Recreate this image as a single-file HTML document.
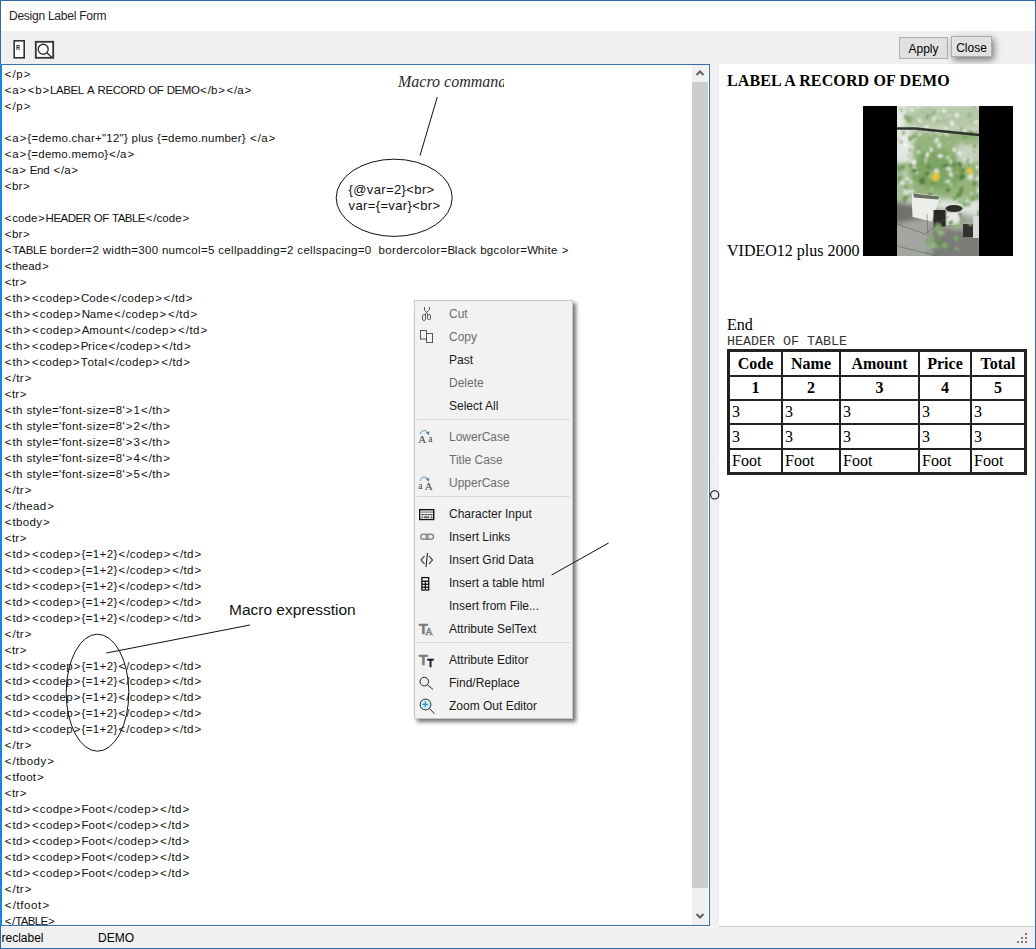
<!DOCTYPE html>
<html><head><meta charset="utf-8">
<style>
*{box-sizing:border-box}
html,body{margin:0;padding:0}
body{width:1036px;height:949px;overflow:hidden;position:relative;background:#fff;font-family:"Liberation Sans",sans-serif;color:#000}
.a{position:absolute}
#win{left:0;top:0;width:1036px;height:949px;border:1px solid #2f6aa6}
#title{left:9px;top:9px;font-size:12px;color:#1e1e1e;white-space:pre;letter-spacing:-0.25px}
#toolbar{left:1px;top:31px;width:1034px;height:33px;background:#f0f0f0}
.btn{position:absolute;background:#e1e1e1;border:1px solid #adadad;font-size:12px;color:#000;text-align:center;white-space:pre}
#editor{left:1px;top:64px;width:709px;height:862px;border-top:1px solid #3a6ea5;border-right:1px solid #3a6ea5;border-bottom:1px solid #3a6ea5;background:#fff}
#leftbar{left:0;top:64px;width:2px;height:862px;background:#1a84de}
#clip{left:2px;top:65px;width:690px;height:860px;overflow:hidden}
.ln{position:absolute;left:2px;font-size:11.5px;line-height:16px;height:16px;white-space:pre;color:#111;letter-spacing:var(--ls,0px)}
.ln i{font-style:normal;margin:0 0.68px}
.ln u{text-decoration:none;letter-spacing:calc(var(--ls,0px) - 0.6px)}
#sb{left:692px;top:65px;width:16px;height:860px;background:#f0f0f0}
#thumb{left:692px;top:82px;width:16px;height:806px;background:#cdcdcd}
#splitter{left:710px;top:64px;width:9px;height:862px;background:#f0f0f0}
#panel{left:719px;top:64px;width:315px;height:863px;background:#fff;border-bottom:1px solid #cfcfcf;overflow:hidden}
#status{left:1px;top:927px;width:1034px;height:21px;background:#f0f0f0;font-size:12px}
#bottom{left:0;top:948px;width:1036px;height:1px;background:#2f6aa6}
.menu{left:414px;top:300px;width:159px;height:419px;background:#f2f2f2;border:1px solid #c8c8c8;box-shadow:3px 3px 4px rgba(0,0,0,.55)}
.mi{position:absolute;left:34px;font-size:12px;line-height:16px;white-space:pre;color:#1a1a1a}
.dis{color:#6d6d6d}
.sep{position:absolute;left:2px;width:153px;height:1px;background:#d7d7d7}
.serif{font-family:"Liberation Serif",serif}
table.t{position:absolute;left:8px;top:285px;border-collapse:separate;border-spacing:0;border:2px solid #222;width:300px;font-family:"Liberation Serif",serif;font-size:16px}
table.t td,table.t th{border:1px solid #222;padding:2px;line-height:16px}
table.t th{font-weight:bold;text-align:center}
table.t td{text-align:left}

</style></head><body>
<div class="a" id="win"></div>
<div class="a" id="title">Design Label Form</div>
<div class="a" id="toolbar"></div>
<svg class="a" style="left:12px;top:39px" width="44" height="21" viewBox="0 0 44 21">
 <rect x="2.2" y="1.8" width="10" height="17" fill="#fff" stroke="#333" stroke-width="1.6"/>
 <text transform="translate(4.1 10.6) scale(0.75 1.05)" font-family="Liberation Sans" font-weight="bold" font-size="7.5" fill="#222">R</text>
 <rect x="23.8" y="2.8" width="17.4" height="16" fill="#fff" stroke="#333" stroke-width="1.8"/>
 <circle cx="31.2" cy="10.3" r="5" fill="none" stroke="#333" stroke-width="1.4"/>
 <line x1="34.8" y1="13.8" x2="40" y2="18.5" stroke="#333" stroke-width="1.4"/>
</svg>
<div class="btn" style="left:899px;top:37px;width:49px;height:22px;line-height:22.5px">Apply</div>
<div class="btn" style="left:951px;top:36px;width:41px;height:21px;line-height:22.5px;box-shadow:2px 3px 7px rgba(0,0,0,.5)">Close</div>
<div class="a" id="editor"></div>
<div class="a" id="leftbar"></div>
<div class="a" id="clip">
<div class="ln" style="top:0.90px;--ls:0.468px"><i>&lt;</i>/p<i>&gt;</i></div>
<div class="ln" style="top:16.90px;--ls:0.157px"><i>&lt;</i>a<i>&gt;</i><i>&lt;</i>b<i>&gt;</i><u>L</u><u>A</u><u>B</u><u>E</u><u>L</u> <u>A</u> <u>R</u><u>E</u><u>C</u><u>O</u><u>R</u><u>D</u> <u>O</u><u>F</u> <u>D</u><u>E</u><u>M</u><u>O</u><i>&lt;</i>/b<i>&gt;</i><i>&lt;</i>/a<i>&gt;</i></div>
<div class="ln" style="top:32.90px;--ls:0.468px"><i>&lt;</i>/p<i>&gt;</i></div>
<div class="ln" style="top:64.90px;--ls:0.254px"><i>&lt;</i>a<i>&gt;</i>{=demo.char+"12"} plus {=demo.number} <i>&lt;</i>/a<i>&gt;</i></div>
<div class="ln" style="top:80.90px;--ls:0.237px"><i>&lt;</i>a<i>&gt;</i>{=demo.memo}<i>&lt;</i>/a<i>&gt;</i></div>
<div class="ln" style="top:96.90px;--ls:0.013px"><i>&lt;</i>a<i>&gt;</i> <u>E</u>nd <i>&lt;</i>/a<i>&gt;</i></div>
<div class="ln" style="top:112.90px;--ls:0.047px"><i>&lt;</i>br<i>&gt;</i></div>
<div class="ln" style="top:144.90px;--ls:0.084px"><i>&lt;</i>code<i>&gt;</i><u>H</u><u>E</u><u>A</u><u>D</u><u>E</u><u>R</u> <u>O</u><u>F</u> <u>T</u><u>A</u><u>B</u><u>L</u><u>E</u><i>&lt;</i>/code<i>&gt;</i></div>
<div class="ln" style="top:160.90px;--ls:0.047px"><i>&lt;</i>br<i>&gt;</i></div>
<div class="ln" style="top:176.90px;--ls:0.328px"><i>&lt;</i><u>T</u><u>A</u><u>B</u><u>L</u><u>E</u> border=2 width=300 numcol=5 cellpadding=2 cellspacing=0  bordercolor=<u>B</u>lack bgcolor=<u>W</u>hite <i>&gt;</i></div>
<div class="ln" style="top:192.90px;--ls:0.060px"><i>&lt;</i>thead<i>&gt;</i></div>
<div class="ln" style="top:208.90px;--ls:-0.038px"><i>&lt;</i>tr<i>&gt;</i></div>
<div class="ln" style="top:224.90px;--ls:0.353px"><i>&lt;</i>th<i>&gt;</i><i>&lt;</i>codep<i>&gt;</i><u>C</u>ode<i>&lt;</i>/codep<i>&gt;</i><i>&lt;</i>/td<i>&gt;</i></div>
<div class="ln" style="top:240.90px;--ls:0.403px"><i>&lt;</i>th<i>&gt;</i><i>&lt;</i>codep<i>&gt;</i><u>N</u>ame<i>&lt;</i>/codep<i>&gt;</i><i>&lt;</i>/td<i>&gt;</i></div>
<div class="ln" style="top:256.90px;--ls:0.415px"><i>&lt;</i>th<i>&gt;</i><i>&lt;</i>codep<i>&gt;</i><u>A</u>mount<i>&lt;</i>/codep<i>&gt;</i><i>&lt;</i>/td<i>&gt;</i></div>
<div class="ln" style="top:272.90px;--ls:0.316px"><i>&lt;</i>th<i>&gt;</i><i>&lt;</i>codep<i>&gt;</i><u>P</u>rice<i>&lt;</i>/codep<i>&gt;</i><i>&lt;</i>/td<i>&gt;</i></div>
<div class="ln" style="top:288.90px;--ls:0.319px"><i>&lt;</i>th<i>&gt;</i><i>&lt;</i>codep<i>&gt;</i><u>T</u>otal<i>&lt;</i>/codep<i>&gt;</i><i>&lt;</i>/td<i>&gt;</i></div>
<div class="ln" style="top:304.90px;--ls:0.436px"><i>&lt;</i>/tr<i>&gt;</i></div>
<div class="ln" style="top:320.90px;--ls:-0.038px"><i>&lt;</i>tr<i>&gt;</i></div>
<div class="ln" style="top:336.90px;--ls:0.384px"><i>&lt;</i>th style='font-size=8'<i>&gt;</i>1<i>&lt;</i>/th<i>&gt;</i></div>
<div class="ln" style="top:352.90px;--ls:0.384px"><i>&lt;</i>th style='font-size=8'<i>&gt;</i>2<i>&lt;</i>/th<i>&gt;</i></div>
<div class="ln" style="top:368.90px;--ls:0.384px"><i>&lt;</i>th style='font-size=8'<i>&gt;</i>3<i>&lt;</i>/th<i>&gt;</i></div>
<div class="ln" style="top:384.90px;--ls:0.384px"><i>&lt;</i>th style='font-size=8'<i>&gt;</i>4<i>&lt;</i>/th<i>&gt;</i></div>
<div class="ln" style="top:400.90px;--ls:0.384px"><i>&lt;</i>th style='font-size=8'<i>&gt;</i>5<i>&lt;</i>/th<i>&gt;</i></div>
<div class="ln" style="top:416.90px;--ls:0.436px"><i>&lt;</i>/tr<i>&gt;</i></div>
<div class="ln" style="top:432.90px;--ls:0.363px"><i>&lt;</i>/thead<i>&gt;</i></div>
<div class="ln" style="top:448.90px;--ls:0.356px"><i>&lt;</i>tbody<i>&gt;</i></div>
<div class="ln" style="top:464.90px;--ls:-0.038px"><i>&lt;</i>tr<i>&gt;</i></div>
<div class="ln" style="top:480.90px;--ls:0.387px"><i>&lt;</i>td<i>&gt;</i><i>&lt;</i>codep<i>&gt;</i>{=1+2}<i>&lt;</i>/codep<i>&gt;</i><i>&lt;</i>/td<i>&gt;</i></div>
<div class="ln" style="top:496.90px;--ls:0.387px"><i>&lt;</i>td<i>&gt;</i><i>&lt;</i>codep<i>&gt;</i>{=1+2}<i>&lt;</i>/codep<i>&gt;</i><i>&lt;</i>/td<i>&gt;</i></div>
<div class="ln" style="top:512.90px;--ls:0.387px"><i>&lt;</i>td<i>&gt;</i><i>&lt;</i>codep<i>&gt;</i>{=1+2}<i>&lt;</i>/codep<i>&gt;</i><i>&lt;</i>/td<i>&gt;</i></div>
<div class="ln" style="top:528.90px;--ls:0.387px"><i>&lt;</i>td<i>&gt;</i><i>&lt;</i>codep<i>&gt;</i>{=1+2}<i>&lt;</i>/codep<i>&gt;</i><i>&lt;</i>/td<i>&gt;</i></div>
<div class="ln" style="top:544.90px;--ls:0.387px"><i>&lt;</i>td<i>&gt;</i><i>&lt;</i>codep<i>&gt;</i>{=1+2}<i>&lt;</i>/codep<i>&gt;</i><i>&lt;</i>/td<i>&gt;</i></div>
<div class="ln" style="top:560.90px;--ls:0.436px"><i>&lt;</i>/tr<i>&gt;</i></div>
<div class="ln" style="top:576.90px;--ls:-0.038px"><i>&lt;</i>tr<i>&gt;</i></div>
<div class="ln" style="top:592.90px;--ls:0.387px"><i>&lt;</i>td<i>&gt;</i><i>&lt;</i>codep<i>&gt;</i>{=1+2}<i>&lt;</i>/codep<i>&gt;</i><i>&lt;</i>/td<i>&gt;</i></div>
<div class="ln" style="top:607.90px;--ls:0.387px"><i>&lt;</i>td<i>&gt;</i><i>&lt;</i>codep<i>&gt;</i>{=1+2}<i>&lt;</i>/codep<i>&gt;</i><i>&lt;</i>/td<i>&gt;</i></div>
<div class="ln" style="top:623.90px;--ls:0.387px"><i>&lt;</i>td<i>&gt;</i><i>&lt;</i>codep<i>&gt;</i>{=1+2}<i>&lt;</i>/codep<i>&gt;</i><i>&lt;</i>/td<i>&gt;</i></div>
<div class="ln" style="top:639.90px;--ls:0.387px"><i>&lt;</i>td<i>&gt;</i><i>&lt;</i>codep<i>&gt;</i>{=1+2}<i>&lt;</i>/codep<i>&gt;</i><i>&lt;</i>/td<i>&gt;</i></div>
<div class="ln" style="top:655.90px;--ls:0.387px"><i>&lt;</i>td<i>&gt;</i><i>&lt;</i>codep<i>&gt;</i>{=1+2}<i>&lt;</i>/codep<i>&gt;</i><i>&lt;</i>/td<i>&gt;</i></div>
<div class="ln" style="top:671.90px;--ls:0.436px"><i>&lt;</i>/tr<i>&gt;</i></div>
<div class="ln" style="top:687.90px;--ls:0.459px"><i>&lt;</i>/tbody<i>&gt;</i></div>
<div class="ln" style="top:703.90px;--ls:0.325px"><i>&lt;</i>tfoot<i>&gt;</i></div>
<div class="ln" style="top:719.90px;--ls:-0.038px"><i>&lt;</i>tr<i>&gt;</i></div>
<div class="ln" style="top:735.90px;--ls:0.395px"><i>&lt;</i>td<i>&gt;</i><i>&lt;</i>codpe<i>&gt;</i><u>F</u>oot<i>&lt;</i>/codep<i>&gt;</i><i>&lt;</i>/td<i>&gt;</i></div>
<div class="ln" style="top:751.90px;--ls:0.395px"><i>&lt;</i>td<i>&gt;</i><i>&lt;</i>codep<i>&gt;</i><u>F</u>oot<i>&lt;</i>/codep<i>&gt;</i><i>&lt;</i>/td<i>&gt;</i></div>
<div class="ln" style="top:767.90px;--ls:0.395px"><i>&lt;</i>td<i>&gt;</i><i>&lt;</i>codep<i>&gt;</i><u>F</u>oot<i>&lt;</i>/codep<i>&gt;</i><i>&lt;</i>/td<i>&gt;</i></div>
<div class="ln" style="top:783.90px;--ls:0.395px"><i>&lt;</i>td<i>&gt;</i><i>&lt;</i>codep<i>&gt;</i><u>F</u>oot<i>&lt;</i>/codep<i>&gt;</i><i>&lt;</i>/td<i>&gt;</i></div>
<div class="ln" style="top:799.90px;--ls:0.395px"><i>&lt;</i>td<i>&gt;</i><i>&lt;</i>codep<i>&gt;</i><u>F</u>oot<i>&lt;</i>/codep<i>&gt;</i><i>&lt;</i>/td<i>&gt;</i></div>
<div class="ln" style="top:815.90px;--ls:0.436px"><i>&lt;</i>/tr<i>&gt;</i></div>
<div class="ln" style="top:831.90px;--ls:0.605px"><i>&lt;</i>/tfoot<i>&gt;</i></div>
<div class="ln" style="top:847.90px;--ls:-0.070px"><i>&lt;</i>/<u>T</u><u>A</u><u>B</u><u>L</u><u>E</u><i>&gt;</i></div>
</div>
<div class="a serif" style="left:398px;top:72.7px;width:106px;height:24px;overflow:hidden;font-size:16px;font-style:italic;white-space:pre;color:#2a2a2a">Macro command</div>
<div class="a" style="left:348.5px;top:182px;font-size:13px;line-height:15.7px;letter-spacing:0.38px;white-space:pre;color:#111">{@var=2}&lt;br&gt;
var={=var}&lt;br&gt;</div>
<div class="a" style="left:229px;top:601px;font-size:15.5px;white-space:pre;color:#111">Macro expresstion</div>
<svg class="a" style="left:0;top:0" width="710" height="925">
 <g stroke="#111" stroke-width="1" fill="none">
  <line x1="437.3" y1="97" x2="420" y2="155.6"/>
  <ellipse cx="394.2" cy="197.8" rx="58" ry="38.6"/>
  <line x1="106.4" y1="653" x2="250" y2="625"/>
  <ellipse cx="97.5" cy="692.7" rx="31.3" ry="58.5"/>
 </g>
</svg>

<div class="a" id="sb"></div>
<div class="a" id="thumb"></div>
<svg class="a" style="left:692px;top:65px" width="16" height="860">
 <polyline points="4.5,10 8,6.5 11.5,10" fill="none" stroke="#606060" stroke-width="2"/>
 <polyline points="4.5,849 8,852.5 11.5,849" fill="none" stroke="#606060" stroke-width="2"/>
</svg>
<div class="a" id="splitter"></div>
<div class="a" id="panel">
 <div class="a serif" style="left:8px;top:7.5px;font-size:16px;font-weight:bold;letter-spacing:0.13px;white-space:pre">LABEL A RECORD OF DEMO</div>
 <div class="a serif" style="left:8px;top:178px;font-size:16px;white-space:pre">VIDEO12 plus 2000</div>
 <svg class="a" style="left:144px;top:42px" width="150" height="150"><defs><filter id="bl" x="-30%" y="-30%" width="160%" height="160%"><feGaussianBlur stdDeviation="2.5"/></filter><filter id="bm" x="-30%" y="-30%" width="160%" height="160%"><feGaussianBlur stdDeviation="1.1"/></filter><filter id="bs" x="-30%" y="-30%" width="160%" height="160%"><feGaussianBlur stdDeviation="0.6"/></filter><clipPath id="pc"><rect x="34" y="0" width="82" height="150"/></clipPath></defs>
<rect x="0" y="0" width="150" height="150" fill="#000"/>
<g clip-path="url(#pc)"><g transform="translate(34 0)">
<rect x="0" y="0" width="82" height="150" fill="#dde3da"/>
<g filter="url(#bl)">
<rect x="5" y="0" width="80" height="22" fill="#b4c7a6"/>
<rect x="-5" y="0" width="14" height="20" fill="#e6ebe4"/>
<rect x="12" y="25" width="72" height="68" fill="#95b47d"/>
<ellipse cx="40" cy="64" rx="26" ry="20" fill="#7ea565"/>
<rect x="-5" y="26" width="20" height="30" fill="#e4e8e2"/>
<rect x="-5" y="56" width="18" height="40" fill="#a9bf9a"/>
<rect x="60" y="38" width="22" height="18" fill="#c9d4c2"/>
<path d="M-5 94 L40 102 L85 112 L85 155 L-5 155 Z" fill="#a3a5a1"/>
<path d="M-5 96 L20 100 L30 112 L-5 118 Z" fill="#6f716d"/>
<path d="M35 120 L85 128 L85 155 L35 155 Z" fill="#7a7c78"/>
</g>
<g filter="url(#bm)">
<ellipse cx="37.1" cy="13.4" rx="2.8" ry="2.0" fill="#dfe7da" opacity="0.95" transform="rotate(91 37.1 13.4)"/>
<ellipse cx="15.1" cy="12.3" rx="2.3" ry="1.8" fill="#9ab585" opacity="0.95" transform="rotate(17 15.1 12.3)"/>
<ellipse cx="11.6" cy="12.9" rx="2.8" ry="2.1" fill="#88a874" opacity="0.95" transform="rotate(107 11.6 12.9)"/>
<ellipse cx="79.1" cy="15.7" rx="2.2" ry="1.3" fill="#eef2ec" opacity="0.95" transform="rotate(3 79.1 15.7)"/>
<ellipse cx="4.9" cy="4.6" rx="1.5" ry="0.8" fill="#88a874" opacity="0.95" transform="rotate(84 4.9 4.6)"/>
<ellipse cx="48.5" cy="4.7" rx="1.5" ry="0.9" fill="#eef2ec" opacity="0.95" transform="rotate(1 48.5 4.7)"/>
<ellipse cx="37.5" cy="6.7" rx="3.0" ry="2.7" fill="#9ab585" opacity="0.95" transform="rotate(151 37.5 6.7)"/>
<ellipse cx="25.9" cy="5.5" rx="1.6" ry="0.8" fill="#88a874" opacity="0.95" transform="rotate(138 25.9 5.5)"/>
<ellipse cx="8.8" cy="7.0" rx="1.1" ry="0.6" fill="#dfe7da" opacity="0.95" transform="rotate(123 8.8 7.0)"/>
<ellipse cx="17.2" cy="21.8" rx="1.9" ry="1.7" fill="#eef2ec" opacity="0.95" transform="rotate(72 17.2 21.8)"/>
<ellipse cx="46.4" cy="4.8" rx="2.3" ry="1.5" fill="#eef2ec" opacity="0.95" transform="rotate(56 46.4 4.8)"/>
<ellipse cx="79.1" cy="18.2" rx="1.2" ry="0.7" fill="#eef2ec" opacity="0.95" transform="rotate(18 79.1 18.2)"/>
<ellipse cx="38.1" cy="11.7" rx="2.4" ry="1.4" fill="#dfe7da" opacity="0.95" transform="rotate(92 38.1 11.7)"/>
<ellipse cx="34.4" cy="9.2" rx="1.8" ry="1.6" fill="#9ab585" opacity="0.95" transform="rotate(0 34.4 9.2)"/>
<ellipse cx="81.8" cy="0.5" rx="1.4" ry="1.2" fill="#eef2ec" opacity="0.95" transform="rotate(108 81.8 0.5)"/>
<ellipse cx="3.5" cy="3.5" rx="1.9" ry="0.9" fill="#9ab585" opacity="0.95" transform="rotate(110 3.5 3.5)"/>
<ellipse cx="31.7" cy="1.8" rx="1.4" ry="1.1" fill="#9ab585" opacity="0.95" transform="rotate(3 31.7 1.8)"/>
<ellipse cx="30.5" cy="10.9" rx="2.9" ry="2.0" fill="#88a874" opacity="0.95" transform="rotate(103 30.5 10.9)"/>
<ellipse cx="15.0" cy="3.7" rx="2.8" ry="2.3" fill="#dfe7da" opacity="0.95" transform="rotate(45 15.0 3.7)"/>
<ellipse cx="13.0" cy="15.1" rx="2.1" ry="1.6" fill="#88a874" opacity="0.95" transform="rotate(70 13.0 15.1)"/>
<ellipse cx="49.5" cy="10.1" rx="1.2" ry="0.6" fill="#dfe7da" opacity="0.95" transform="rotate(173 49.5 10.1)"/>
<ellipse cx="60.7" cy="9.4" rx="1.8" ry="1.6" fill="#dfe7da" opacity="0.95" transform="rotate(88 60.7 9.4)"/>
<ellipse cx="76.2" cy="23.5" rx="1.3" ry="0.9" fill="#eef2ec" opacity="0.95" transform="rotate(118 76.2 23.5)"/>
<ellipse cx="23.0" cy="22.0" rx="1.4" ry="0.7" fill="#88a874" opacity="0.95" transform="rotate(48 23.0 22.0)"/>
<ellipse cx="20.4" cy="1.1" rx="1.6" ry="1.1" fill="#eef2ec" opacity="0.95" transform="rotate(175 20.4 1.1)"/>
<ellipse cx="29.7" cy="21.4" rx="3.0" ry="2.3" fill="#dfe7da" opacity="0.95" transform="rotate(124 29.7 21.4)"/>
<ellipse cx="48.4" cy="22.2" rx="1.9" ry="1.3" fill="#eef2ec" opacity="0.95" transform="rotate(56 48.4 22.2)"/>
<ellipse cx="1.7" cy="15.3" rx="2.0" ry="1.6" fill="#eef2ec" opacity="0.95" transform="rotate(57 1.7 15.3)"/>
<ellipse cx="6.2" cy="13.1" rx="2.5" ry="2.1" fill="#dfe7da" opacity="0.95" transform="rotate(133 6.2 13.1)"/>
<ellipse cx="65.0" cy="22.0" rx="1.7" ry="1.3" fill="#88a874" opacity="0.95" transform="rotate(162 65.0 22.0)"/>
<ellipse cx="77.4" cy="0.7" rx="2.0" ry="1.0" fill="#88a874" opacity="0.95" transform="rotate(119 77.4 0.7)"/>
<ellipse cx="47.8" cy="14.6" rx="1.2" ry="0.9" fill="#88a874" opacity="0.95" transform="rotate(179 47.8 14.6)"/>
<ellipse cx="59.7" cy="9.3" rx="2.5" ry="1.8" fill="#eef2ec" opacity="0.95" transform="rotate(79 59.7 9.3)"/>
<ellipse cx="42.5" cy="12.3" rx="1.6" ry="0.9" fill="#eef2ec" opacity="0.95" transform="rotate(4 42.5 12.3)"/>
<ellipse cx="40.8" cy="14.7" rx="2.8" ry="1.7" fill="#9ab585" opacity="0.95" transform="rotate(2 40.8 14.7)"/>
<ellipse cx="11.7" cy="14.7" rx="2.0" ry="1.6" fill="#88a874" opacity="0.95" transform="rotate(62 11.7 14.7)"/>
<ellipse cx="40.9" cy="5.8" rx="1.8" ry="1.1" fill="#dfe7da" opacity="0.95" transform="rotate(114 40.9 5.8)"/>
<ellipse cx="72.2" cy="9.2" rx="2.2" ry="1.4" fill="#88a874" opacity="0.95" transform="rotate(25 72.2 9.2)"/>
<ellipse cx="28.8" cy="21.5" rx="1.1" ry="0.6" fill="#dfe7da" opacity="0.95" transform="rotate(176 28.8 21.5)"/>
<ellipse cx="9.3" cy="11.3" rx="2.9" ry="2.4" fill="#88a874" opacity="0.95" transform="rotate(69 9.3 11.3)"/>
<ellipse cx="55.1" cy="17.2" rx="2.7" ry="2.0" fill="#eef2ec" opacity="0.95" transform="rotate(58 55.1 17.2)"/>
<ellipse cx="22.8" cy="14.6" rx="2.4" ry="1.4" fill="#eef2ec" opacity="0.95" transform="rotate(64 22.8 14.6)"/>
<ellipse cx="52.6" cy="9.7" rx="1.4" ry="1.1" fill="#dfe7da" opacity="0.95" transform="rotate(48 52.6 9.7)"/>
<ellipse cx="65.3" cy="23.6" rx="1.2" ry="0.7" fill="#9ab585" opacity="0.95" transform="rotate(96 65.3 23.6)"/>
<ellipse cx="78.6" cy="16.4" rx="1.4" ry="1.0" fill="#eef2ec" opacity="0.95" transform="rotate(32 78.6 16.4)"/>
<ellipse cx="61.9" cy="44.3" rx="1.1" ry="0.6" fill="#9cbc86" opacity="0.95" transform="rotate(140 61.9 44.3)"/>
<ellipse cx="57.2" cy="43.8" rx="2.1" ry="1.7" fill="#f4f6f2" opacity="0.95" transform="rotate(71 57.2 43.8)"/>
<ellipse cx="74.3" cy="27.3" rx="2.7" ry="2.1" fill="#5a8544" opacity="0.95" transform="rotate(23 74.3 27.3)"/>
<ellipse cx="16.1" cy="57.7" rx="1.0" ry="0.7" fill="#9cbc86" opacity="0.95" transform="rotate(117 16.1 57.7)"/>
<ellipse cx="65.3" cy="59.9" rx="1.8" ry="1.4" fill="#f4f6f2" opacity="0.95" transform="rotate(37 65.3 59.9)"/>
<ellipse cx="71.0" cy="54.3" rx="2.7" ry="1.5" fill="#5a8544" opacity="0.95" transform="rotate(44 71.0 54.3)"/>
<ellipse cx="80.4" cy="61.1" rx="2.0" ry="1.6" fill="#f4f6f2" opacity="0.95" transform="rotate(58 80.4 61.1)"/>
<ellipse cx="70.2" cy="37.2" rx="1.1" ry="0.8" fill="#6e9a54" opacity="0.95" transform="rotate(99 70.2 37.2)"/>
<ellipse cx="40.0" cy="25.1" rx="2.5" ry="1.3" fill="#e2e9de" opacity="0.95" transform="rotate(144 40.0 25.1)"/>
<ellipse cx="43.7" cy="50.1" rx="2.6" ry="1.8" fill="#f4f6f2" opacity="0.95" transform="rotate(180 43.7 50.1)"/>
<ellipse cx="42.5" cy="49.8" rx="1.8" ry="1.5" fill="#f4f6f2" opacity="0.95" transform="rotate(104 42.5 49.8)"/>
<ellipse cx="7.1" cy="32.4" rx="1.9" ry="1.2" fill="#f4f6f2" opacity="0.95" transform="rotate(131 7.1 32.4)"/>
<ellipse cx="13.5" cy="43.5" rx="2.6" ry="1.6" fill="#9cbc86" opacity="0.95" transform="rotate(121 13.5 43.5)"/>
<ellipse cx="17.1" cy="56.3" rx="2.7" ry="1.9" fill="#e2e9de" opacity="0.95" transform="rotate(103 17.1 56.3)"/>
<ellipse cx="33.7" cy="28.3" rx="1.0" ry="0.7" fill="#eef2ec" opacity="0.95" transform="rotate(97 33.7 28.3)"/>
<ellipse cx="42.3" cy="39.2" rx="2.4" ry="1.8" fill="#f4f6f2" opacity="0.95" transform="rotate(88 42.3 39.2)"/>
<ellipse cx="13.7" cy="59.4" rx="1.8" ry="1.6" fill="#5a8544" opacity="0.95" transform="rotate(144 13.7 59.4)"/>
<ellipse cx="22.1" cy="42.0" rx="1.2" ry="0.8" fill="#5a8544" opacity="0.95" transform="rotate(147 22.1 42.0)"/>
<ellipse cx="43.0" cy="28.1" rx="1.8" ry="0.9" fill="#f4f6f2" opacity="0.95" transform="rotate(47 43.0 28.1)"/>
<ellipse cx="63.9" cy="24.9" rx="1.3" ry="0.8" fill="#6e9a54" opacity="0.95" transform="rotate(124 63.9 24.9)"/>
<ellipse cx="59.3" cy="33.3" rx="1.9" ry="1.3" fill="#9cbc86" opacity="0.95" transform="rotate(105 59.3 33.3)"/>
<ellipse cx="51.1" cy="51.3" rx="2.3" ry="1.9" fill="#f4f6f2" opacity="0.95" transform="rotate(4 51.1 51.3)"/>
<ellipse cx="33.9" cy="44.1" rx="1.3" ry="0.7" fill="#f4f6f2" opacity="0.95" transform="rotate(114 33.9 44.1)"/>
<ellipse cx="17.9" cy="32.2" rx="2.0" ry="1.5" fill="#f4f6f2" opacity="0.95" transform="rotate(25 17.9 32.2)"/>
<ellipse cx="51.5" cy="37.2" rx="1.3" ry="1.0" fill="#e2e9de" opacity="0.95" transform="rotate(160 51.5 37.2)"/>
<ellipse cx="17.9" cy="61.9" rx="2.6" ry="1.4" fill="#f4f6f2" opacity="0.95" transform="rotate(43 17.9 61.9)"/>
<ellipse cx="7.2" cy="38.7" rx="1.8" ry="1.6" fill="#f4f6f2" opacity="0.95" transform="rotate(98 7.2 38.7)"/>
<ellipse cx="10.3" cy="39.3" rx="2.2" ry="1.1" fill="#f4f6f2" opacity="0.95" transform="rotate(36 10.3 39.3)"/>
<ellipse cx="29.3" cy="55.2" rx="1.7" ry="1.3" fill="#6e9a54" opacity="0.95" transform="rotate(114 29.3 55.2)"/>
<ellipse cx="41.2" cy="50.1" rx="1.3" ry="0.7" fill="#eef2ec" opacity="0.95" transform="rotate(19 41.2 50.1)"/>
<ellipse cx="62.5" cy="47.3" rx="2.6" ry="1.8" fill="#eef2ec" opacity="0.95" transform="rotate(34 62.5 47.3)"/>
<ellipse cx="16.7" cy="55.9" rx="2.8" ry="2.4" fill="#eef2ec" opacity="0.95" transform="rotate(17 16.7 55.9)"/>
<ellipse cx="11.0" cy="49.9" rx="1.1" ry="0.6" fill="#5a8544" opacity="0.95" transform="rotate(70 11.0 49.9)"/>
<ellipse cx="42.3" cy="40.3" rx="2.1" ry="1.1" fill="#e2e9de" opacity="0.95" transform="rotate(126 42.3 40.3)"/>
<ellipse cx="14.9" cy="41.3" rx="2.3" ry="1.5" fill="#e2e9de" opacity="0.95" transform="rotate(35 14.9 41.3)"/>
<ellipse cx="7.8" cy="54.1" rx="1.6" ry="0.8" fill="#f4f6f2" opacity="0.95" transform="rotate(152 7.8 54.1)"/>
<ellipse cx="77.0" cy="45.6" rx="1.3" ry="1.0" fill="#6e9a54" opacity="0.95" transform="rotate(61 77.0 45.6)"/>
<ellipse cx="22.9" cy="28.4" rx="2.3" ry="1.3" fill="#e2e9de" opacity="0.95" transform="rotate(168 22.9 28.4)"/>
<ellipse cx="73.5" cy="57.4" rx="2.3" ry="1.8" fill="#5a8544" opacity="0.95" transform="rotate(138 73.5 57.4)"/>
<ellipse cx="17.0" cy="31.0" rx="2.4" ry="1.5" fill="#6e9a54" opacity="0.95" transform="rotate(18 17.0 31.0)"/>
<ellipse cx="81.2" cy="58.3" rx="1.1" ry="0.7" fill="#6e9a54" opacity="0.95" transform="rotate(173 81.2 58.3)"/>
<ellipse cx="27.7" cy="49.1" rx="2.0" ry="1.4" fill="#5a8544" opacity="0.95" transform="rotate(70 27.7 49.1)"/>
<ellipse cx="52.7" cy="50.6" rx="2.4" ry="2.1" fill="#9cbc86" opacity="0.95" transform="rotate(4 52.7 50.6)"/>
<ellipse cx="8.9" cy="33.0" rx="1.8" ry="1.3" fill="#f4f6f2" opacity="0.95" transform="rotate(137 8.9 33.0)"/>
<ellipse cx="30.8" cy="27.7" rx="1.5" ry="1.3" fill="#9cbc86" opacity="0.95" transform="rotate(99 30.8 27.7)"/>
<ellipse cx="34.1" cy="43.8" rx="2.5" ry="1.4" fill="#f4f6f2" opacity="0.95" transform="rotate(80 34.1 43.8)"/>
<ellipse cx="6.2" cy="46.7" rx="2.4" ry="1.2" fill="#e2e9de" opacity="0.95" transform="rotate(167 6.2 46.7)"/>
<ellipse cx="31.6" cy="60.9" rx="2.5" ry="1.8" fill="#5a8544" opacity="0.95" transform="rotate(107 31.6 60.9)"/>
<ellipse cx="77.5" cy="40.0" rx="1.9" ry="1.4" fill="#6e9a54" opacity="0.95" transform="rotate(66 77.5 40.0)"/>
<ellipse cx="39.6" cy="34.3" rx="2.7" ry="2.0" fill="#eef2ec" opacity="0.95" transform="rotate(135 39.6 34.3)"/>
<ellipse cx="1.1" cy="33.3" rx="1.1" ry="0.6" fill="#5a8544" opacity="0.95" transform="rotate(136 1.1 33.3)"/>
<ellipse cx="4.3" cy="36.0" rx="1.7" ry="1.3" fill="#6e9a54" opacity="0.95" transform="rotate(130 4.3 36.0)"/>
<ellipse cx="6.0" cy="58.4" rx="1.8" ry="1.2" fill="#e2e9de" opacity="0.95" transform="rotate(175 6.0 58.4)"/>
<ellipse cx="3.7" cy="27.7" rx="2.5" ry="2.1" fill="#e2e9de" opacity="0.95" transform="rotate(26 3.7 27.7)"/>
<ellipse cx="49.5" cy="28.4" rx="2.1" ry="1.4" fill="#eef2ec" opacity="0.95" transform="rotate(37 49.5 28.4)"/>
<ellipse cx="29.2" cy="29.9" rx="1.7" ry="0.9" fill="#9cbc86" opacity="0.95" transform="rotate(75 29.2 29.9)"/>
<ellipse cx="21.5" cy="46.1" rx="1.8" ry="1.4" fill="#e2e9de" opacity="0.95" transform="rotate(96 21.5 46.1)"/>
<ellipse cx="78.1" cy="51.9" rx="1.4" ry="0.8" fill="#9cbc86" opacity="0.95" transform="rotate(161 78.1 51.9)"/>
<ellipse cx="51.2" cy="37.6" rx="1.5" ry="1.2" fill="#9cbc86" opacity="0.95" transform="rotate(102 51.2 37.6)"/>
<ellipse cx="15.6" cy="34.6" rx="1.4" ry="1.3" fill="#f4f6f2" opacity="0.95" transform="rotate(90 15.6 34.6)"/>
<ellipse cx="75.1" cy="57.4" rx="1.1" ry="0.6" fill="#5a8544" opacity="0.95" transform="rotate(49 75.1 57.4)"/>
<ellipse cx="2.2" cy="25.4" rx="1.4" ry="0.9" fill="#f4f6f2" opacity="0.95" transform="rotate(136 2.2 25.4)"/>
<ellipse cx="13.2" cy="32.9" rx="2.8" ry="1.9" fill="#6e9a54" opacity="0.95" transform="rotate(64 13.2 32.9)"/>
<ellipse cx="28.2" cy="52.3" rx="2.5" ry="1.3" fill="#9cbc86" opacity="0.95" transform="rotate(22 28.2 52.3)"/>
<ellipse cx="68.7" cy="53.2" rx="1.8" ry="1.4" fill="#e2e9de" opacity="0.95" transform="rotate(70 68.7 53.2)"/>
<ellipse cx="30.3" cy="48.8" rx="2.8" ry="1.8" fill="#f4f6f2" opacity="0.95" transform="rotate(99 30.3 48.8)"/>
<ellipse cx="67.7" cy="31.0" rx="2.2" ry="1.6" fill="#6e9a54" opacity="0.95" transform="rotate(83 67.7 31.0)"/>
<ellipse cx="6.4" cy="27.2" rx="2.0" ry="1.4" fill="#6e9a54" opacity="0.95" transform="rotate(123 6.4 27.2)"/>
<ellipse cx="67.5" cy="24.4" rx="1.6" ry="1.3" fill="#f4f6f2" opacity="0.95" transform="rotate(109 67.5 24.4)"/>
<ellipse cx="24.9" cy="51.5" rx="2.2" ry="1.4" fill="#6e9a54" opacity="0.95" transform="rotate(26 24.9 51.5)"/>
<ellipse cx="53.9" cy="68.1" rx="3.2" ry="2.0" fill="#dfe7da" opacity="0.95" transform="rotate(79 53.9 68.1)"/>
<ellipse cx="75.3" cy="92.6" rx="3.2" ry="2.2" fill="#79a362" opacity="0.95" transform="rotate(145 75.3 92.6)"/>
<ellipse cx="37.6" cy="63.8" rx="3.3" ry="2.6" fill="#5c8a45" opacity="0.95" transform="rotate(93 37.6 63.8)"/>
<ellipse cx="29.7" cy="69.6" rx="2.0" ry="1.3" fill="#4d7a3a" opacity="0.95" transform="rotate(70 29.7 69.6)"/>
<ellipse cx="60.6" cy="69.7" rx="2.1" ry="1.2" fill="#4d7a3a" opacity="0.95" transform="rotate(106 60.6 69.7)"/>
<ellipse cx="14.5" cy="85.4" rx="3.1" ry="1.9" fill="#dfe7da" opacity="0.95" transform="rotate(4 14.5 85.4)"/>
<ellipse cx="4.7" cy="61.3" rx="1.9" ry="0.9" fill="#9fc08a" opacity="0.95" transform="rotate(152 4.7 61.3)"/>
<ellipse cx="5.3" cy="76.9" rx="2.9" ry="1.6" fill="#eef2ec" opacity="0.95" transform="rotate(15 5.3 76.9)"/>
<ellipse cx="8.6" cy="67.6" rx="1.3" ry="1.0" fill="#eef2ec" opacity="0.95" transform="rotate(18 8.6 67.6)"/>
<ellipse cx="34.6" cy="83.5" rx="2.3" ry="2.0" fill="#9fc08a" opacity="0.95" transform="rotate(61 34.6 83.5)"/>
<ellipse cx="32.3" cy="68.5" rx="3.3" ry="2.6" fill="#dfe7da" opacity="0.95" transform="rotate(89 32.3 68.5)"/>
<ellipse cx="66.0" cy="57.9" rx="2.6" ry="1.3" fill="#eef2ec" opacity="0.95" transform="rotate(136 66.0 57.9)"/>
<ellipse cx="28.6" cy="55.2" rx="2.0" ry="1.1" fill="#dfe7da" opacity="0.95" transform="rotate(84 28.6 55.2)"/>
<ellipse cx="52.5" cy="76.0" rx="2.8" ry="2.3" fill="#9fc08a" opacity="0.95" transform="rotate(76 52.5 76.0)"/>
<ellipse cx="75.1" cy="64.8" rx="1.6" ry="1.2" fill="#79a362" opacity="0.95" transform="rotate(123 75.1 64.8)"/>
<ellipse cx="16.8" cy="72.0" rx="1.8" ry="1.6" fill="#79a362" opacity="0.95" transform="rotate(11 16.8 72.0)"/>
<ellipse cx="59.9" cy="67.1" rx="1.5" ry="1.3" fill="#9fc08a" opacity="0.95" transform="rotate(164 59.9 67.1)"/>
<ellipse cx="1.4" cy="74.2" rx="3.0" ry="1.9" fill="#79a362" opacity="0.95" transform="rotate(36 1.4 74.2)"/>
<ellipse cx="17.8" cy="64.4" rx="2.8" ry="2.0" fill="#4d7a3a" opacity="0.95" transform="rotate(40 17.8 64.4)"/>
<ellipse cx="73.4" cy="71.1" rx="3.2" ry="2.8" fill="#dfe7da" opacity="0.95" transform="rotate(113 73.4 71.1)"/>
<ellipse cx="39.3" cy="65.4" rx="3.2" ry="2.7" fill="#dfe7da" opacity="0.95" transform="rotate(62 39.3 65.4)"/>
<ellipse cx="63.3" cy="58.7" rx="3.1" ry="2.0" fill="#4d7a3a" opacity="0.95" transform="rotate(39 63.3 58.7)"/>
<ellipse cx="65.7" cy="70.4" rx="2.4" ry="1.7" fill="#5c8a45" opacity="0.95" transform="rotate(49 65.7 70.4)"/>
<ellipse cx="53.9" cy="64.5" rx="1.2" ry="0.8" fill="#4d7a3a" opacity="0.95" transform="rotate(67 53.9 64.5)"/>
<ellipse cx="58.5" cy="79.2" rx="1.5" ry="0.9" fill="#79a362" opacity="0.95" transform="rotate(58 58.5 79.2)"/>
<ellipse cx="74.5" cy="87.4" rx="1.5" ry="1.2" fill="#dfe7da" opacity="0.95" transform="rotate(112 74.5 87.4)"/>
<ellipse cx="43.8" cy="61.0" rx="2.9" ry="1.4" fill="#4d7a3a" opacity="0.95" transform="rotate(148 43.8 61.0)"/>
<ellipse cx="67.4" cy="58.3" rx="1.8" ry="1.4" fill="#9fc08a" opacity="0.95" transform="rotate(17 67.4 58.3)"/>
<ellipse cx="56.9" cy="58.3" rx="2.8" ry="2.0" fill="#5c8a45" opacity="0.95" transform="rotate(91 56.9 58.3)"/>
<ellipse cx="64.7" cy="71.7" rx="3.2" ry="1.7" fill="#4d7a3a" opacity="0.95" transform="rotate(149 64.7 71.7)"/>
<ellipse cx="3.1" cy="71.5" rx="2.3" ry="2.0" fill="#79a362" opacity="0.95" transform="rotate(174 3.1 71.5)"/>
<ellipse cx="25.5" cy="58.0" rx="1.9" ry="1.3" fill="#79a362" opacity="0.95" transform="rotate(129 25.5 58.0)"/>
<ellipse cx="6.1" cy="60.6" rx="2.7" ry="2.1" fill="#5c8a45" opacity="0.95" transform="rotate(134 6.1 60.6)"/>
<ellipse cx="53.6" cy="55.5" rx="2.0" ry="1.6" fill="#dfe7da" opacity="0.95" transform="rotate(43 53.6 55.5)"/>
<ellipse cx="9.3" cy="85.9" rx="3.1" ry="2.6" fill="#dfe7da" opacity="0.95" transform="rotate(129 9.3 85.9)"/>
<ellipse cx="12.5" cy="80.1" rx="3.3" ry="2.6" fill="#9fc08a" opacity="0.95" transform="rotate(172 12.5 80.1)"/>
<ellipse cx="45.6" cy="58.5" rx="1.6" ry="1.1" fill="#79a362" opacity="0.95" transform="rotate(20 45.6 58.5)"/>
<ellipse cx="77.5" cy="77.5" rx="2.8" ry="1.8" fill="#5c8a45" opacity="0.95" transform="rotate(149 77.5 77.5)"/>
<ellipse cx="8.4" cy="79.9" rx="1.5" ry="1.1" fill="#4d7a3a" opacity="0.95" transform="rotate(32 8.4 79.9)"/>
<ellipse cx="33.0" cy="88.5" rx="2.5" ry="1.3" fill="#4d7a3a" opacity="0.95" transform="rotate(41 33.0 88.5)"/>
<ellipse cx="81.0" cy="72.4" rx="2.9" ry="1.8" fill="#dfe7da" opacity="0.95" transform="rotate(148 81.0 72.4)"/>
<ellipse cx="11.4" cy="63.2" rx="1.5" ry="1.2" fill="#9fc08a" opacity="0.95" transform="rotate(87 11.4 63.2)"/>
<ellipse cx="51.1" cy="84.1" rx="2.5" ry="1.6" fill="#4d7a3a" opacity="0.95" transform="rotate(142 51.1 84.1)"/>
<ellipse cx="54.1" cy="79.3" rx="1.2" ry="0.8" fill="#eef2ec" opacity="0.95" transform="rotate(62 54.1 79.3)"/>
<ellipse cx="36.2" cy="77.3" rx="1.7" ry="1.0" fill="#5c8a45" opacity="0.95" transform="rotate(53 36.2 77.3)"/>
<ellipse cx="50.1" cy="61.3" rx="2.9" ry="2.5" fill="#79a362" opacity="0.95" transform="rotate(99 50.1 61.3)"/>
<ellipse cx="50.2" cy="75.5" rx="2.5" ry="1.4" fill="#eef2ec" opacity="0.95" transform="rotate(168 50.2 75.5)"/>
<ellipse cx="58.0" cy="92.4" rx="2.4" ry="1.3" fill="#5c8a45" opacity="0.95" transform="rotate(119 58.0 92.4)"/>
<ellipse cx="11.2" cy="74.1" rx="2.1" ry="1.3" fill="#79a362" opacity="0.95" transform="rotate(17 11.2 74.1)"/>
<ellipse cx="21.8" cy="90.3" rx="2.2" ry="1.7" fill="#dfe7da" opacity="0.95" transform="rotate(43 21.8 90.3)"/>
<ellipse cx="44.6" cy="77.4" rx="2.4" ry="1.5" fill="#79a362" opacity="0.95" transform="rotate(164 44.6 77.4)"/>
<ellipse cx="49.3" cy="59.9" rx="3.0" ry="1.9" fill="#4d7a3a" opacity="0.95" transform="rotate(161 49.3 59.9)"/>
<ellipse cx="62.2" cy="69.5" rx="1.6" ry="1.2" fill="#9fc08a" opacity="0.95" transform="rotate(146 62.2 69.5)"/>
<ellipse cx="2.6" cy="62.2" rx="3.4" ry="3.0" fill="#79a362" opacity="0.95" transform="rotate(119 2.6 62.2)"/>
<ellipse cx="62.0" cy="88.9" rx="3.2" ry="2.4" fill="#5c8a45" opacity="0.95" transform="rotate(115 62.0 88.9)"/>
<ellipse cx="13.0" cy="71.5" rx="1.3" ry="0.9" fill="#9fc08a" opacity="0.95" transform="rotate(21 13.0 71.5)"/>
<ellipse cx="14.2" cy="75.8" rx="1.8" ry="1.3" fill="#eef2ec" opacity="0.95" transform="rotate(60 14.2 75.8)"/>
<ellipse cx="64.3" cy="83.9" rx="2.9" ry="1.9" fill="#5c8a45" opacity="0.95" transform="rotate(90 64.3 83.9)"/>
<ellipse cx="38.5" cy="71.5" rx="2.6" ry="2.0" fill="#79a362" opacity="0.95" transform="rotate(136 38.5 71.5)"/>
<ellipse cx="39.8" cy="94.8" rx="3.0" ry="2.6" fill="#9fc08a" opacity="0.95" transform="rotate(74 39.8 94.8)"/>
<ellipse cx="9.6" cy="59.6" rx="3.3" ry="2.1" fill="#9fc08a" opacity="0.95" transform="rotate(94 9.6 59.6)"/>
<ellipse cx="74.2" cy="67.8" rx="1.3" ry="1.0" fill="#eef2ec" opacity="0.95" transform="rotate(162 74.2 67.8)"/>
<ellipse cx="30.9" cy="67.9" rx="2.9" ry="2.5" fill="#4d7a3a" opacity="0.95" transform="rotate(158 30.9 67.9)"/>
<ellipse cx="10.2" cy="72.9" rx="2.3" ry="1.5" fill="#eef2ec" opacity="0.95" transform="rotate(9 10.2 72.9)"/>
<ellipse cx="8.6" cy="91.4" rx="2.4" ry="1.8" fill="#5c8a45" opacity="0.95" transform="rotate(169 8.6 91.4)"/>
<ellipse cx="81.9" cy="84.2" rx="3.1" ry="2.0" fill="#dfe7da" opacity="0.95" transform="rotate(98 81.9 84.2)"/>
<ellipse cx="66.0" cy="63.9" rx="2.8" ry="2.1" fill="#5c8a45" opacity="0.95" transform="rotate(163 66.0 63.9)"/>
<ellipse cx="42.6" cy="60.2" rx="3.1" ry="2.3" fill="#79a362" opacity="0.95" transform="rotate(82 42.6 60.2)"/>
<ellipse cx="20.0" cy="67.0" rx="1.9" ry="1.0" fill="#dfe7da" opacity="0.95" transform="rotate(161 20.0 67.0)"/>
<ellipse cx="32.6" cy="69.3" rx="2.5" ry="1.3" fill="#79a362" opacity="0.95" transform="rotate(6 32.6 69.3)"/>
<ellipse cx="25.2" cy="74.9" rx="3.3" ry="2.9" fill="#4d7a3a" opacity="0.95" transform="rotate(85 25.2 74.9)"/>
<ellipse cx="16.6" cy="89.4" rx="2.7" ry="1.4" fill="#79a362" opacity="0.95" transform="rotate(57 16.6 89.4)"/>
<ellipse cx="73.7" cy="55.6" rx="2.6" ry="2.0" fill="#dfe7da" opacity="0.95" transform="rotate(101 73.7 55.6)"/>
<ellipse cx="51.9" cy="62.7" rx="3.1" ry="1.6" fill="#eef2ec" opacity="0.95" transform="rotate(19 51.9 62.7)"/>
<ellipse cx="67.1" cy="93.5" rx="1.8" ry="1.2" fill="#79a362" opacity="0.95" transform="rotate(158 67.1 93.5)"/>
<ellipse cx="57.1" cy="92.5" rx="2.2" ry="1.2" fill="#79a362" opacity="0.95" transform="rotate(40 57.1 92.5)"/>
<ellipse cx="9.9" cy="82.6" rx="1.8" ry="1.4" fill="#79a362" opacity="0.95" transform="rotate(90 9.9 82.6)"/>
<ellipse cx="64.8" cy="69.9" rx="2.7" ry="2.3" fill="#4d7a3a" opacity="0.95" transform="rotate(106 64.8 69.9)"/>
<ellipse cx="80.1" cy="90.8" rx="1.6" ry="0.9" fill="#eef2ec" opacity="0.95" transform="rotate(24 80.1 90.8)"/>
<ellipse cx="7.4" cy="94.3" rx="2.2" ry="1.5" fill="#5c8a45" opacity="0.95" transform="rotate(96 7.4 94.3)"/>
</g>
<path d="M0 22.5 L18 22.5 L82 29" fill="none" stroke="#2f332f" stroke-width="2.6" filter="url(#bs)"/>
<path d="M17 22 L17 34" stroke="#2f332f" stroke-width="1.8" filter="url(#bs)"/>
<g filter="url(#bs)">
<path d="M14.6 87 L43.5 90 L34.7 115.4 L15.5 111 Z" fill="#eceeea"/>
<path d="M16 87.5 L43 90.5 L41 93.5 L17 91.5 Z" fill="#6b7060"/>
<rect x="36.5" y="104" width="12" height="16.6" fill="#2b2c28"/>
<rect x="49.6" y="106.6" width="13" height="12.4" fill="#e6e8e4"/>
<ellipse cx="57" cy="102.5" rx="8.5" ry="3.5" fill="#2f2f28"/>
<rect x="66" y="118" width="10.7" height="13" fill="#33332e"/>
<rect x="76" y="110" width="6" height="22" fill="#d9dbd6"/>
</g>
<g filter="url(#bm)">
<ellipse cx="30.3" cy="135.5" rx="2.8" ry="1.9" fill="#7fa96a" opacity="0.95" transform="rotate(102 30.3 135.5)"/>
<ellipse cx="40.8" cy="141.4" rx="2.1" ry="1.3" fill="#7fa96a" opacity="0.95" transform="rotate(99 40.8 141.4)"/>
<ellipse cx="60.0" cy="120.3" rx="3.7" ry="2.8" fill="#92b57c" opacity="0.95" transform="rotate(165 60.0 120.3)"/>
<ellipse cx="30.1" cy="146.2" rx="1.7" ry="0.9" fill="#5d8a4a" opacity="0.95" transform="rotate(140 30.1 146.2)"/>
<ellipse cx="42.2" cy="131.9" rx="1.6" ry="1.0" fill="#7fa96a" opacity="0.95" transform="rotate(149 42.2 131.9)"/>
<ellipse cx="52.6" cy="142.0" rx="1.8" ry="1.2" fill="#5d8a4a" opacity="0.95" transform="rotate(120 52.6 142.0)"/>
<ellipse cx="59.9" cy="142.7" rx="2.1" ry="1.5" fill="#92b57c" opacity="0.95" transform="rotate(40 59.9 142.7)"/>
<ellipse cx="39.9" cy="122.1" rx="3.9" ry="2.0" fill="#7fa96a" opacity="0.95" transform="rotate(81 39.9 122.1)"/>
<ellipse cx="42.4" cy="136.3" rx="3.0" ry="2.5" fill="#5d8a4a" opacity="0.95" transform="rotate(91 42.4 136.3)"/>
<ellipse cx="62.6" cy="116.1" rx="1.8" ry="1.0" fill="#7fa96a" opacity="0.95" transform="rotate(115 62.6 116.1)"/>
<ellipse cx="53.7" cy="116.9" rx="2.6" ry="2.0" fill="#5d8a4a" opacity="0.95" transform="rotate(148 53.7 116.9)"/>
<ellipse cx="59.1" cy="132.4" rx="3.1" ry="2.2" fill="#7fa96a" opacity="0.95" transform="rotate(68 59.1 132.4)"/>
<ellipse cx="36.1" cy="139.2" rx="3.6" ry="2.9" fill="#92b57c" opacity="0.95" transform="rotate(11 36.1 139.2)"/>
<ellipse cx="47.7" cy="139.5" rx="3.3" ry="2.9" fill="#7fa96a" opacity="0.95" transform="rotate(23 47.7 139.5)"/>
<ellipse cx="35.5" cy="130.9" rx="3.4" ry="1.7" fill="#7fa96a" opacity="0.95" transform="rotate(43 35.5 130.9)"/>
<ellipse cx="33.5" cy="134.5" rx="2.7" ry="2.3" fill="#7fa96a" opacity="0.95" transform="rotate(175 33.5 134.5)"/>
<ellipse cx="41.2" cy="119.2" rx="3.6" ry="2.4" fill="#7fa96a" opacity="0.95" transform="rotate(15 41.2 119.2)"/>
<ellipse cx="43.8" cy="126.8" rx="4.0" ry="2.9" fill="#92b57c" opacity="0.95" transform="rotate(7 43.8 126.8)"/>
<ellipse cx="73.7" cy="117.8" rx="2.5" ry="1.8" fill="#9fc08a" opacity="0.95" transform="rotate(164 73.7 117.8)"/>
<ellipse cx="80.5" cy="90.9" rx="2.7" ry="2.4" fill="#7fa96a" opacity="0.95" transform="rotate(38 80.5 90.9)"/>
<ellipse cx="77.6" cy="92.1" rx="1.8" ry="1.0" fill="#6a9656" opacity="0.95" transform="rotate(99 77.6 92.1)"/>
<ellipse cx="71.6" cy="98.2" rx="2.3" ry="1.8" fill="#7fa96a" opacity="0.95" transform="rotate(85 71.6 98.2)"/>
<ellipse cx="81.9" cy="107.4" rx="2.8" ry="1.6" fill="#6a9656" opacity="0.95" transform="rotate(69 81.9 107.4)"/>
<ellipse cx="62.9" cy="94.1" rx="2.9" ry="2.2" fill="#9fc08a" opacity="0.95" transform="rotate(93 62.9 94.1)"/>
<ellipse cx="67.2" cy="98.0" rx="2.9" ry="2.3" fill="#7fa96a" opacity="0.95" transform="rotate(48 67.2 98.0)"/>
<ellipse cx="63.1" cy="109.0" rx="2.6" ry="1.4" fill="#6a9656" opacity="0.95" transform="rotate(43 63.1 109.0)"/>
<ellipse cx="62.4" cy="95.6" rx="1.9" ry="1.0" fill="#7fa96a" opacity="0.95" transform="rotate(159 62.4 95.6)"/>
<ellipse cx="67.1" cy="114.0" rx="2.4" ry="1.5" fill="#7fa96a" opacity="0.95" transform="rotate(109 67.1 114.0)"/>
<circle cx="38.5" cy="71" r="4.3" fill="#e9c63a"/>
<circle cx="72.7" cy="64.8" r="3.5" fill="#e2c244"/>
</g>
<path d="M0 118 L28 128 L52 110 M30 108 L31 130 M0 140 L40 150" fill="none" stroke="#55574f" stroke-width="0.7" opacity="0.7"/>
</g></g></svg>
 <div class="a serif" style="left:8px;top:252px;font-size:16px;white-space:pre">End</div>
 <div class="a" style="left:8px;top:270px;font-family:'Liberation Mono',monospace;font-size:13.33px;color:#333;white-space:pre">HEADER OF TABLE</div>
 <table class="t"><tr style="height:25px"><th style="width:53px">Code</th><th style="width:58px">Name</th><th style="width:79px">Amount</th><th style="width:52px">Price</th><th style="width:54px">Total</th></tr><tr style="height:24px"><th>1</th><th>2</th><th>3</th><th>4</th><th>5</th></tr><tr style="height:24px"><td>3</td><td>3</td><td>3</td><td>3</td><td>3</td></tr><tr style="height:25px"><td>3</td><td>3</td><td>3</td><td>3</td><td>3</td></tr><tr style="height:24px"><td>Foot</td><td>Foot</td><td>Foot</td><td>Foot</td><td>Foot</td></tr></table>
</div>
<svg class="a" style="left:709px;top:489px" width="12" height="12"><circle cx="5.7" cy="5.9" r="4.1" fill="#f0f0f0" stroke="#111" stroke-width="1.1"/></svg>
<div class="a" id="status"></div>
<div class="a menu">
<svg class="a" style="left:0;top:0" width="32" height="416" viewBox="415 301 32 416">
 <!-- scissors -->
 <g stroke="#5a5a5a" fill="none" stroke-width="1">
  <path d="M424.5 307 V310 L427.5 313.5 V318"/><path d="M429.5 307 V309.5 L425.5 313.5 V318"/>
  <rect x="422.5" y="314.5" width="3" height="6" rx="1.4"/><rect x="427.5" y="314.5" width="3" height="5" rx="1.4"/>
 </g>
 <!-- copy -->
 <g stroke="#555" fill="none" stroke-width="1">
  <rect x="420.5" y="330.5" width="6" height="8.5"/><rect x="426.5" y="333.5" width="6" height="9"/>
 </g>
 <!-- lowercase / uppercase -->
 <g font-family="Liberation Serif" fill="#444">
  <text x="418.3" y="443" font-size="11">A</text><text x="428.3" y="442.3" font-size="9.5">a</text>
  <text x="418.3" y="489.3" font-size="9.5">a</text><text x="424.8" y="490" font-size="11">A</text>
 </g>
 <g stroke="#5d8aa8" fill="none" stroke-width="1">
  <path d="M420.3 434.3 C420.8 429.8 426 429.5 427.6 432.6"/><path d="M420.3 480.8 C420.8 476.3 426 476 427.6 479.1"/>
 </g>
 <path d="M425.6 432.2 L429.6 431.6 L428.6 435.4 Z M425.6 478.7 L429.6 478.1 L428.6 481.9 Z" fill="#5d8aa8"/>
 <!-- keyboard -->
 <rect x="419.7" y="509.7" width="14" height="9.8" fill="#fff" stroke="#111" stroke-width="1.4"/>
 <g fill="#222">
  <rect x="421.5" y="511.5" width="1.2" height="1.2"/><rect x="423.5" y="511.5" width="1.2" height="1.2"/><rect x="425.5" y="511.5" width="1.2" height="1.2"/><rect x="427.5" y="511.5" width="1.2" height="1.2"/><rect x="429.5" y="511.5" width="1.2" height="1.2"/><rect x="431.3" y="511.5" width="1.2" height="1.2"/>
  <rect x="421.5" y="514" width="2.2" height="1.2"/><rect x="424.5" y="514" width="2.2" height="1.2"/><rect x="427.5" y="514" width="2.2" height="1.2"/><rect x="430.3" y="514" width="2.2" height="1.2"/>
  <rect x="421.5" y="516.5" width="1.5" height="1.2"/><rect x="423.8" y="516.5" width="5.5" height="1.2"/><rect x="430.5" y="516.5" width="2" height="1.2"/>
 </g>
 <!-- links -->
 <g stroke="#8a8a8a" fill="none" stroke-width="1.4">
  <rect x="420.7" y="534.2" width="7.5" height="5" rx="2.5"/><rect x="426" y="534.2" width="7.5" height="5" rx="2.5"/>
 </g>
 <!-- code -->
 <g stroke="#222" fill="none" stroke-width="1.1">
  <polyline points="424.5,556 421,560 424.5,564"/><polyline points="429,556 432.5,560 429,564"/>
  <line x1="427.5" y1="553" x2="426" y2="567"/>
 </g>
 <!-- calculator -->
 <rect x="421.9" y="577.6" width="6.8" height="12.4" fill="#fff" stroke="#111" stroke-width="1.3"/>
 <g fill="#111"><rect x="421.9" y="580.6" width="6.8" height="1.3"/><rect x="421.9" y="583.6" width="6.8" height="1.3"/><rect x="421.9" y="586.6" width="6.8" height="1.3"/><rect x="424.7" y="580.6" width="1.3" height="9"/></g>
 <!-- TA -->
 <g font-family="Liberation Sans" font-weight="bold">
  <text x="418.8" y="634" font-size="15" fill="#7a7a7a" stroke="#7a7a7a" stroke-width="0.4">T</text>
  <text x="418.8" y="665.2" font-size="15" fill="#7a7a7a" stroke="#7a7a7a" stroke-width="0.4">T</text>
  <text x="427.2" y="666.5" font-size="10.5" fill="#111" stroke="#111" stroke-width="0.3">T</text>
 </g>
 <text x="425.2" y="634.6" font-family="Liberation Serif" font-size="10.5" fill="none" stroke="#7a7a7a" stroke-width="0.7">A</text>
 <!-- find -->
 <g stroke="#222" fill="none" stroke-width="1">
  <circle cx="424.3" cy="681.6" r="4.3"/><line x1="427.5" y1="684.8" x2="433" y2="689.5"/>
 </g>
 <!-- zoom -->
 <circle cx="425.5" cy="704.5" r="5.4" fill="#d6f1fb" stroke="#222" stroke-width="1"/>
 <line x1="429.3" y1="708.3" x2="434.5" y2="713.8" stroke="#222" stroke-width="1"/>
 <g stroke="#2e8fbf" stroke-width="1.3"><line x1="422.3" y1="704.3" x2="428.3" y2="704.3"/><line x1="425.3" y1="701.3" x2="425.3" y2="707.3"/></g>
</svg>
<div class="mi dis" style="top:4.6px">Cut</div>
<div class="mi dis" style="top:27.6px">Copy</div>
<div class="mi" style="top:50.6px">Past</div>
<div class="mi dis" style="top:73.6px">Delete</div>
<div class="mi" style="top:96.6px">Select All</div>
<div class="mi dis" style="top:127.6px">LowerCase</div>
<div class="mi dis" style="top:150.6px">Title Case</div>
<div class="mi dis" style="top:173.6px">UpperCase</div>
<div class="mi" style="top:204.6px">Character Input</div>
<div class="mi" style="top:227.6px">Insert Links</div>
<div class="mi" style="top:250.6px">Insert Grid Data</div>
<div class="mi" style="top:273.6px">Insert a table html</div>
<div class="mi" style="top:296.6px">Insert from File...</div>
<div class="mi" style="top:319.6px">Attribute SelText</div>
<div class="mi" style="top:350.6px">Attribute Editor</div>
<div class="mi" style="top:373.6px">Find/Replace</div>
<div class="mi" style="top:396.6px">Zoom Out Editor</div>
<div class="sep" style="top:118px"></div>
<div class="sep" style="top:195px"></div>
<div class="sep" style="top:341px"></div>
</div>

<svg class="a" style="left:540px;top:535px" width="80" height="50"><line x1="11.6" y1="40" x2="68.6" y2="8" stroke="#111" stroke-width="1"/></svg>
<div class="a" style="left:1.5px;top:931px;font-size:12px;white-space:pre;color:#000">reclabel</div>
<div class="a" style="left:98px;top:931px;font-size:12px;white-space:pre;color:#000">DEMO</div>
<svg class="a" style="left:1014.5px;top:931px" width="16" height="16">
 <rect x="10" y="2" width="2" height="2" fill="#777"/>
 <rect x="6" y="6" width="2" height="2" fill="#777"/><rect x="10" y="6" width="2" height="2" fill="#777"/>
 <rect x="2" y="10" width="2" height="2" fill="#777"/><rect x="6" y="10" width="2" height="2" fill="#777"/><rect x="10" y="10" width="2" height="2" fill="#777"/>
</svg>
<div class="a" id="bottom"></div>

</body></html>
